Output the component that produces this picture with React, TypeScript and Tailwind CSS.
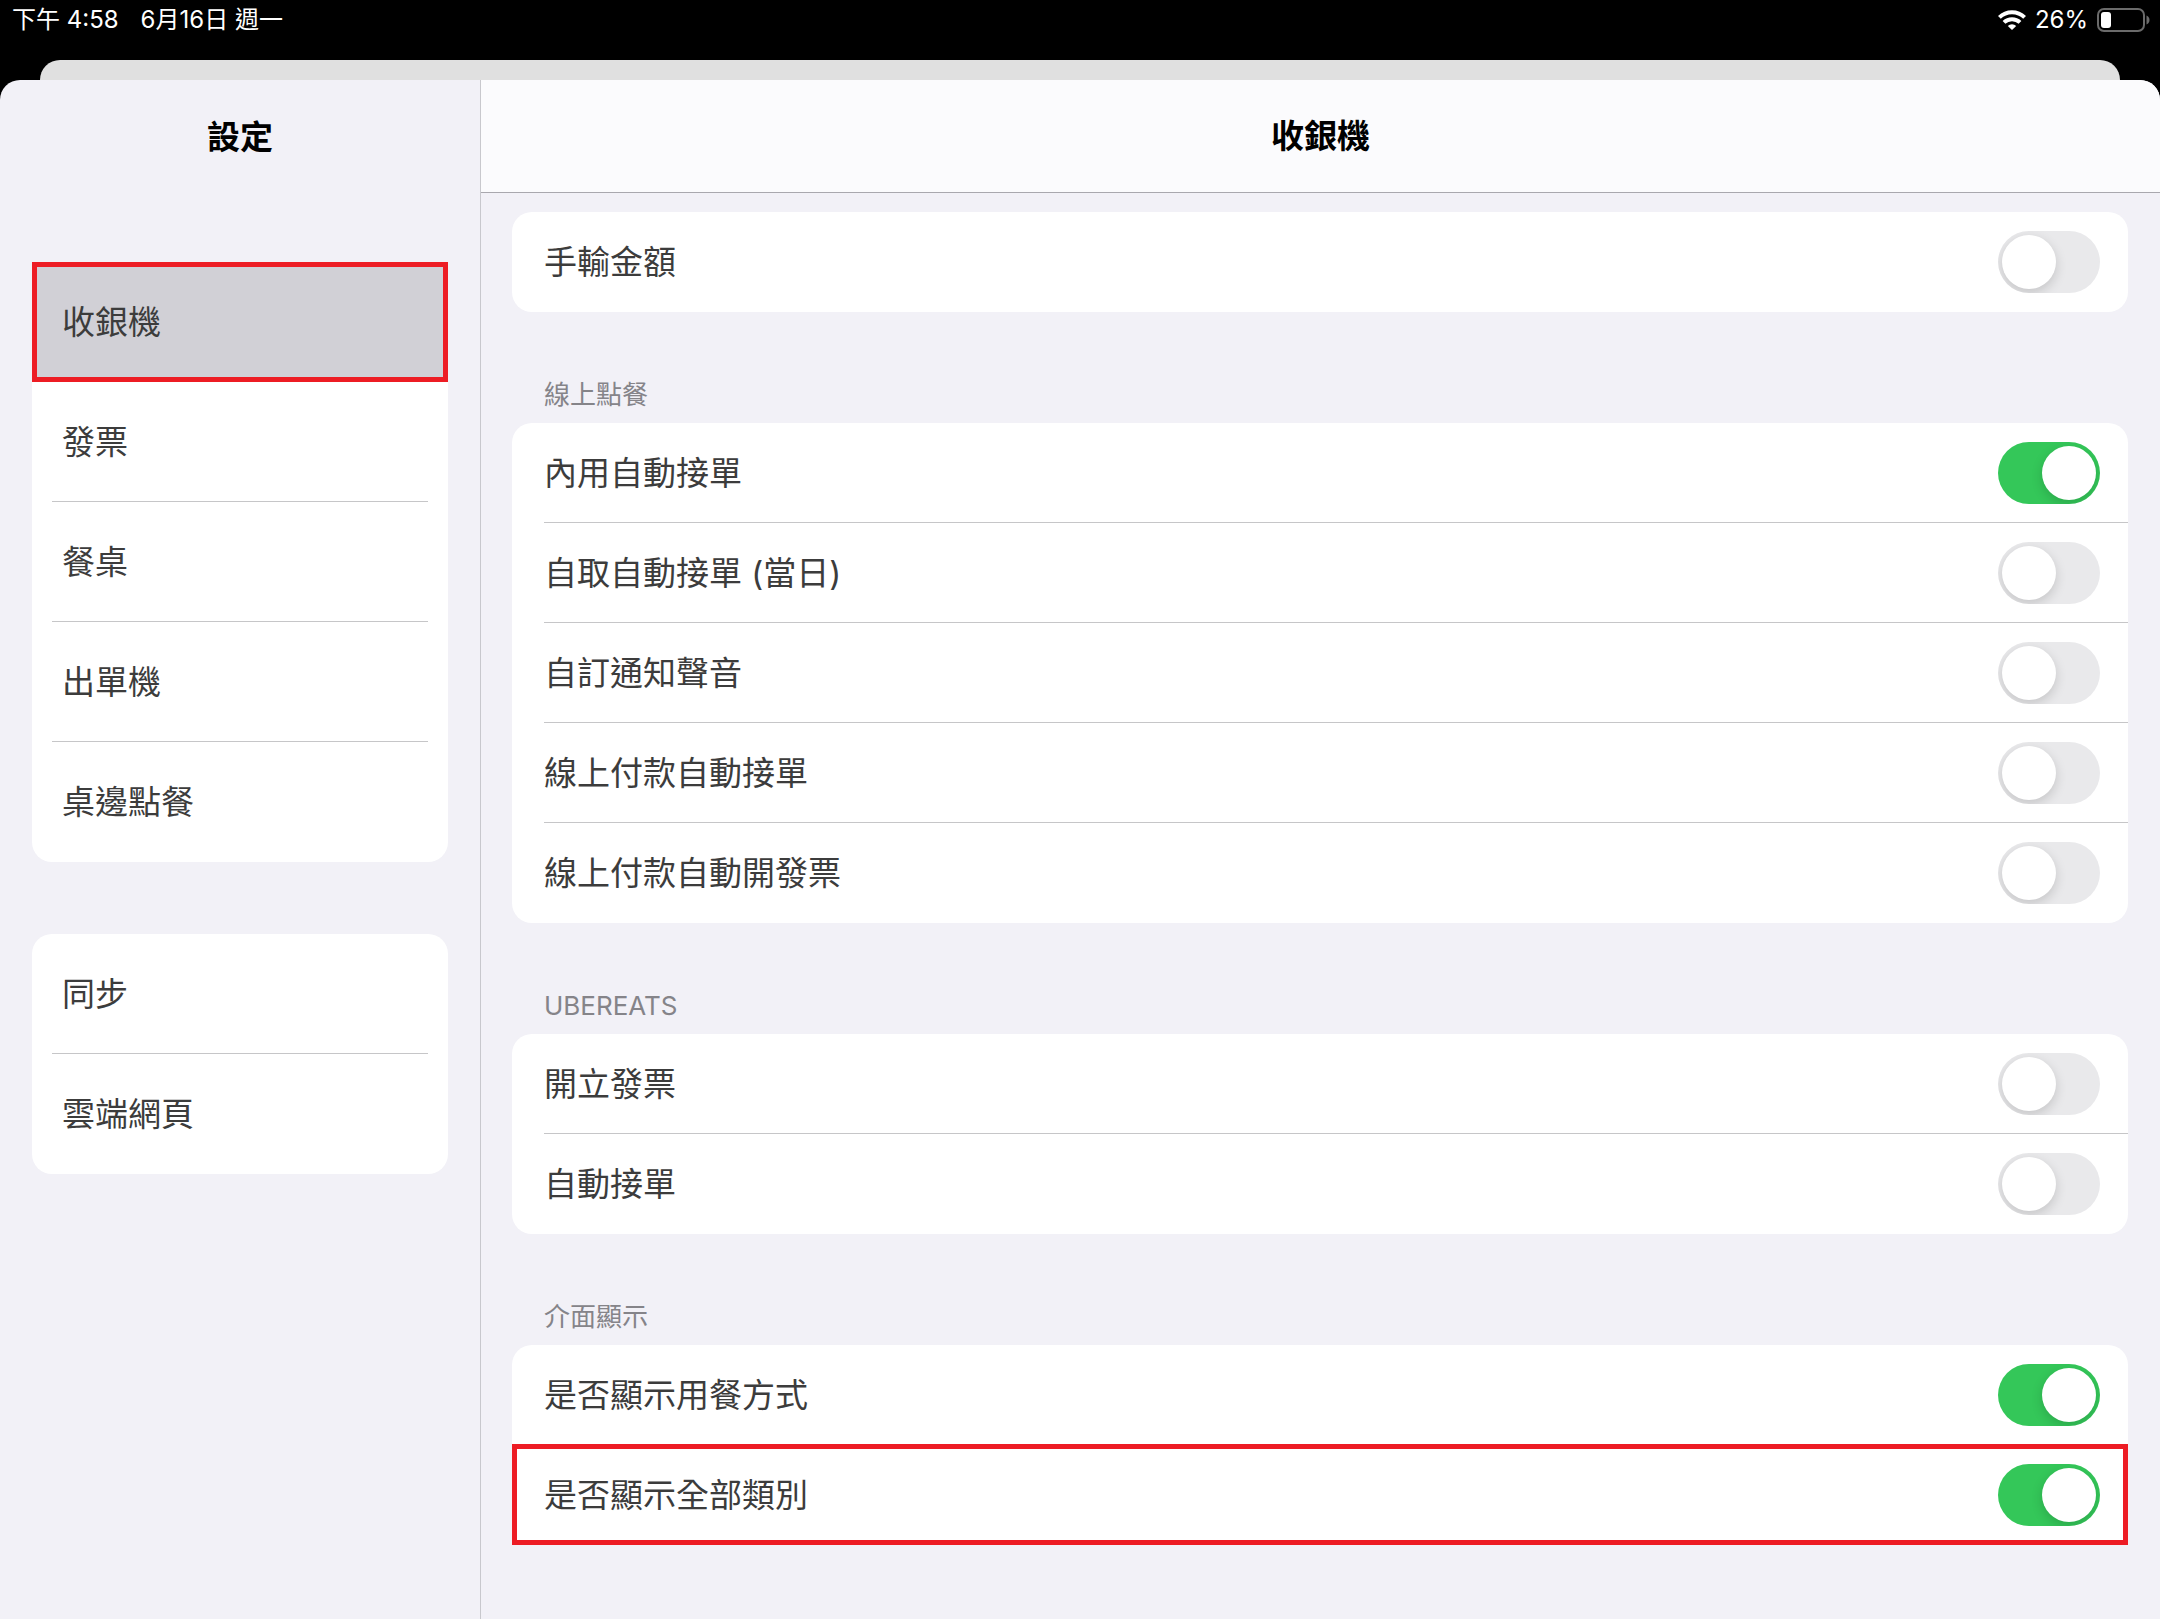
import { useState } from 'react';
import clsx from 'clsx';

interface ToggleSetting {
  id: string;
  label: string;
  enabled: boolean;
  marked?: boolean;
}

interface SettingSection {
  title?: string;
  items: ToggleSetting[];
}

const menuGroups = [
  ['收銀機', '發票', '餐桌', '出單機', '桌邊點餐'],
  ['同步', '雲端網頁'],
];

const sections: SettingSection[] = [
  {
    items: [{ id: 'manual-amount', label: '手輸金額', enabled: false }],
  },
  {
    title: '線上點餐',
    items: [
      { id: 'dine-in-accept', label: '內用自動接單', enabled: true },
      { id: 'pickup-accept', label: '自取自動接單 (當日)', enabled: false },
      { id: 'custom-sound', label: '自訂通知聲音', enabled: false },
      { id: 'online-pay-accept', label: '線上付款自動接單', enabled: false },
      { id: 'online-pay-invoice', label: '線上付款自動開發票', enabled: false },
    ],
  },
  {
    title: 'UBEREATS',
    items: [
      { id: 'uber-invoice', label: '開立發票', enabled: false },
      { id: 'uber-accept', label: '自動接單', enabled: false },
    ],
  },
  {
    title: '介面顯示',
    items: [
      { id: 'show-dining-type', label: '是否顯示用餐方式', enabled: true },
      { id: 'show-all-categories', label: '是否顯示全部類別', enabled: true, marked: true },
    ],
  },
];

function WifiIcon() {
  return (
    <svg className="h-5 w-7" viewBox="0 0 28 20" fill="none" stroke="white" strokeWidth="4" aria-hidden="true">
      <path d="M1.4 7.4a18.2 18.2 0 0 1 25.2 0" />
      <path d="M6 12.4a11.6 11.6 0 0 1 16 0" />
      <path d="M14 20l-4.2-4.1a6 6 0 0 1 8.4 0z" fill="white" stroke="none" />
    </svg>
  );
}

function BatteryIcon() {
  return (
    <svg className="h-6 w-[53px]" viewBox="0 0 53 24" fill="none" aria-hidden="true">
      <rect x="1" y="1" width="46" height="22" rx="6" stroke="#6b6b6b" strokeWidth="2" />
      <rect x="4" y="4" width="10" height="16" rx="3" fill="white" />
      <path d="M49.5 7.5c1.9.7 3 2.4 3 4.5s-1.1 3.8-3 4.5z" fill="#6b6b6b" />
    </svg>
  );
}

function StatusBar() {
  return (
    <div className="flex h-10 items-center justify-between pr-[10px] pl-3 text-2xl text-white">
      <div className="flex gap-[22px]">
        <span>下午 4:58</span>
        <span>6月16日 週一</span>
      </div>
      <div className="flex items-center gap-[9px]">
        <WifiIcon />
        <span>26%</span>
        <BatteryIcon />
      </div>
    </div>
  );
}

function Sidebar({ active, onSelect }: { active: string; onSelect: (name: string) => void }) {
  return (
    <aside className="w-[481px] shrink-0 border-r border-[#c8c8cd]">
      <h1 className="flex h-[114px] items-center justify-center text-[33px] leading-10 font-bold text-black">設定</h1>
      <nav className="flex flex-col gap-[72px] px-8 pt-[68px]">
        {menuGroups.map((group) => (
          <ul key={group[0]} className={clsx('rounded-[20px] bg-white', active === group[0] && 'rounded-t-none')}>
            {group.map((name, i) => (
              <li key={name} className={clsx(name === active ? 'border-[5px] border-[#ed1c24] bg-[#d1d0d6]' : 'px-5')}>
                <button
                  type="button"
                  onClick={() => onSelect(name)}
                  className={clsx(
                    'flex w-full items-center text-left text-[33px] leading-10',
                    name === active ? 'h-[110px] px-[25px]' : 'h-[120px] px-[10px]',
                    name !== active && i < group.length - 1 && 'border-b border-[#c6c6c8]',
                  )}
                >
                  {name}
                </button>
              </li>
            ))}
          </ul>
        ))}
      </nav>
    </aside>
  );
}

function ToggleRow({ item, last }: { item: ToggleSetting; last: boolean }) {
  const [on, setOn] = useState(item.enabled);

  return (
    <li className="relative pl-8">
      <div className={clsx('flex h-[100px] items-center justify-between pr-7', !last && 'border-b border-[#c6c6c8]')}>
        <label htmlFor={item.id} className="text-[33px] leading-10">
          {item.label}
        </label>
        <input
          id={item.id}
          type="checkbox"
          role="switch"
          checked={on}
          onChange={(e) => setOn(e.target.checked)}
          className="flex h-[62px] w-[102px] shrink-0 appearance-none items-center overflow-hidden rounded-full bg-[#e9e9eb] p-1 before:size-[54px] before:rounded-full before:bg-white before:shadow-[0_4px_12px_rgba(0,0,0,0.16)] checked:justify-end checked:bg-[#34c759]"
        />
      </div>
      {/* Highlight frame, covers the separator above */}
      {item.marked && (
        <span className="pointer-events-none absolute inset-x-0 -top-px bottom-0 border-[5px] border-[#ed1c24]" />
      )}
    </li>
  );
}

export default function App() {
  const [active, setActive] = useState('收銀機');

  return (
    <div className="min-h-screen bg-white pr-[5px] font-['Inter','Noto_Sans_CJK_TC',sans-serif] text-[#3c3c3c]">
      <div className="flex min-h-screen flex-col bg-black">
        <StatusBar />
        <div className="mx-10 mt-5 h-5 rounded-t-[20px] bg-[#e0e0e0]" />
        <div className="flex flex-1 overflow-hidden rounded-t-[20px] bg-[#f2f1f7]">
          <Sidebar active={active} onSelect={setActive} />
          <main className="min-w-0 flex-1">
            <header className="flex h-[113px] items-center justify-center border-b border-[#a9a8ae] bg-[#fbfbfd]">
              <h2 className="text-[33px] leading-10 font-bold text-black">{active}</h2>
            </header>
            <div className="pt-[19px] pr-8 pb-[74px] pl-[31px]">
              {sections.map((section) => (
                <section key={section.items[0].id}>
                  {section.title && (
                    <h3 className="px-8 pt-[67px] pb-3 text-[26px] leading-8 text-[#858489]">{section.title}</h3>
                  )}
                  <ul
                    className={clsx(
                      'bg-white',
                      section.items.some((item) => item.marked) ? 'rounded-t-[20px]' : 'rounded-[20px]',
                    )}
                  >
                    {section.items.map((item, i) => (
                      <ToggleRow key={item.id} item={item} last={i === section.items.length - 1} />
                    ))}
                  </ul>
                </section>
              ))}
            </div>
          </main>
        </div>
      </div>
    </div>
  );
}
